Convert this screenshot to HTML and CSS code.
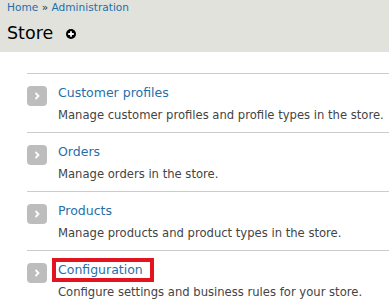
FILE: index.html
```html
<!DOCTYPE html>
<html lang="en">
<head>
<meta charset="UTF-8">
<meta name="viewport" content="width=device-width, initial-scale=1.0">
<title>Store</title>
<link rel="stylesheet" href="styles.css">
</head>
<body>
<div class="branding">
  <div class="breadcrumb"><a href="#">Home</a> » <a href="#">Administration</a></div>
  <h1 class="page-title">Store <span class="shortcut">
    <svg width="10" height="10" viewBox="0 0 10 10"><circle cx="5" cy="5" r="5" fill="#000"/><path d="M5 2.2v5.6M2.2 5h5.6" stroke="#fff" stroke-width="1.8"/></svg>
  </span></h1>
</div>
<div class="page">
  <ul class="admin-list">
    <li>
      <span class="arrow"><svg width="8" height="10" viewBox="0 0 8 10"><path d="M2.5 2l3 3-3 3" fill="none" stroke="#fff" stroke-width="1.8"/></svg></span>
      <div class="item">
        <a href="#">Customer profiles</a>
        <div class="description">Manage customer profiles and profile types in the store.</div>
      </div>
    </li>
    <li>
      <span class="arrow"><svg width="8" height="10" viewBox="0 0 8 10"><path d="M2.5 2l3 3-3 3" fill="none" stroke="#fff" stroke-width="1.8"/></svg></span>
      <div class="item">
        <a href="#">Orders</a>
        <div class="description">Manage orders in the store.</div>
      </div>
    </li>
    <li>
      <span class="arrow"><svg width="8" height="10" viewBox="0 0 8 10"><path d="M2.5 2l3 3-3 3" fill="none" stroke="#fff" stroke-width="1.8"/></svg></span>
      <div class="item">
        <a href="#">Products</a>
        <div class="description">Manage products and product types in the store.</div>
      </div>
    </li>
    <li>
      <span class="arrow"><svg width="8" height="10" viewBox="0 0 8 10"><path d="M2.5 2l3 3-3 3" fill="none" stroke="#fff" stroke-width="1.8"/></svg></span>
      <div class="item">
        <a href="#" class="highlight">Configuration</a>
        <div class="description">Configure settings and business rules for your store.</div>
      </div>
    </li>
  </ul>
</div>
</body>
</html>
```

FILE: styles.css
```css
body {
  margin: 0;
  font-family: "DejaVu Sans", Verdana, sans-serif;
  background: #fff;
  color: #333;
}
a {
  color: #1f6fab;
  text-decoration: none;
}
.branding {
  background: #e1e2dc;
  padding: 0 7px;
  height: 52px;
  overflow: hidden;
}
.breadcrumb {
  font-size: 10.6px;
  line-height: 14px;
}
.page-title {
  margin: 0;
  padding-top: 5px;
  font-size: 17.5px;
  font-weight: normal;
  line-height: 28px;
  color: #000;
}
.shortcut {
  display: inline-block;
  margin-left: 7px;
  vertical-align: 0;
}
.shortcut svg {
  display: block;
}
.page {
  padding: 21px 0 0 27px;
}
.admin-list {
  list-style: none;
  margin: 0;
  padding: 0;
}
.admin-list li {
  display: flex;
  gap: 11px;
  border-top: 1px solid #ccc;
  padding-top: 8px;
  box-sizing: border-box;
  height: 59px;
}
.arrow {
  width: 20px;
  height: 20px;
  border-radius: 4px;
  background: #bdbdbd;
  display: flex;
  align-items: center;
  justify-content: center;
  flex-shrink: 0;
  margin-top: 4px;
}
.item a {
  font-size: 12.5px;
  line-height: 18px;
  display: inline-block;
}
.description {
  font-size: 11.6px;
  line-height: 16px;
  margin-top: 5px;
  color: #444;
  white-space: nowrap;
}
.item a.highlight {
  padding: 0 8px 0 3px;
  margin-left: -3px;
  outline: 4px solid #e3141f;
  outline-offset: -1px;
}
```
